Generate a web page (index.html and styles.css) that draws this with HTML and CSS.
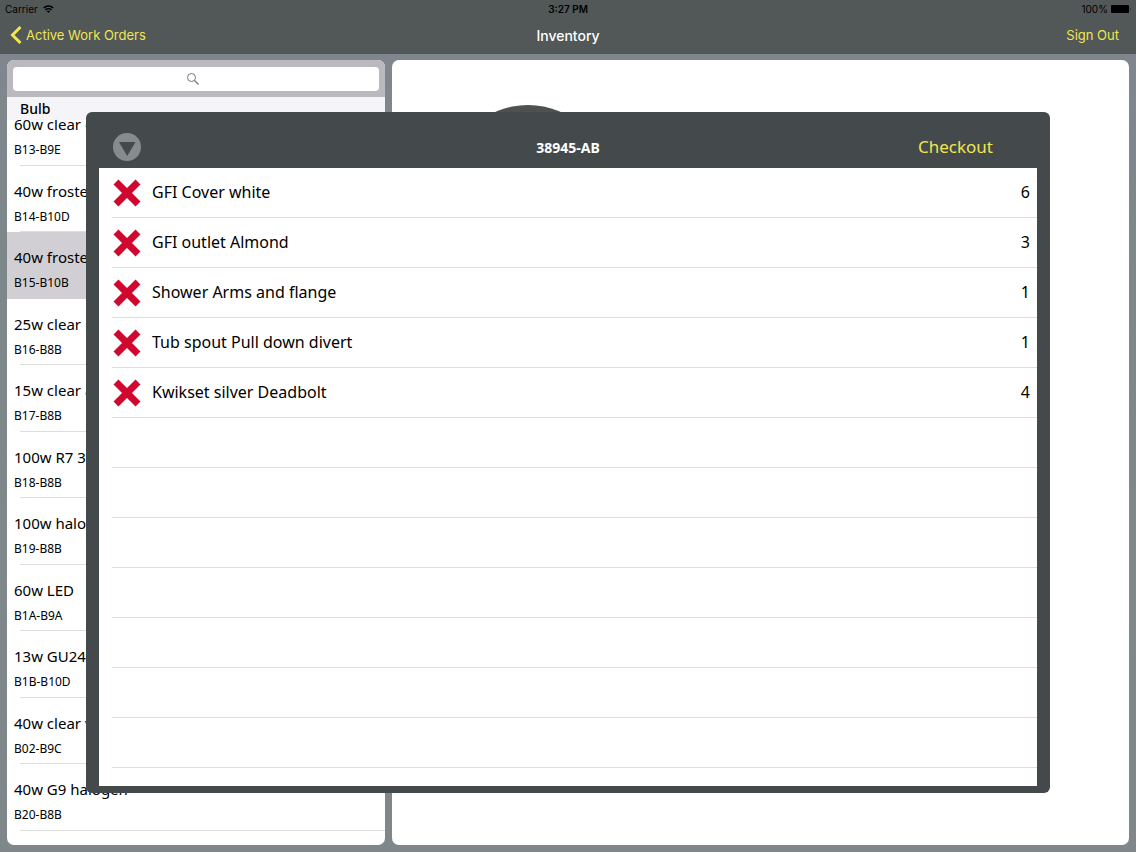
FILE: index.html
```html
<!DOCTYPE html>
<html lang="en">
<head>
    <meta charset="UTF-8">
    <meta name="viewport" content="width=device-width, initial-scale=1.0">
    <title>Inventory</title>
    <link rel="stylesheet" href="styles.css">
</head>
<body>

<header>
    <div class="status-bar">
        <span class="carrier">Carrier
            <svg width="11" height="8" viewBox="0 0 22 16" fill="none" stroke="#000" stroke-width="3">
                <path d="M1.5 6a13.5 13.5 0 0 1 19 0M5 10a8.5 8.5 0 0 1 12 0"/>
                <path d="M11 16l-3.500-3.500a5 5 0 0 1 7 0z" fill="#000" stroke="none"/>
            </svg>
        </span>
        <span class="time">3:27 PM</span>
        <span class="battery">100%
            <svg width="20" height="8" viewBox="0 0 20 8">
                <rect width="18" height="8" rx="1"/>
                <path d="M19 2.500q1 1.500 0 3z"/>
            </svg>
        </span>
    </div>
    <nav class="nav-bar">
        <a href="#" class="back">
            <svg width="12" height="18" viewBox="0 0 12 18" fill="none" stroke="#f0e650" stroke-width="3">
                <path d="M10.500 1L2.500 9l8 8"/>
            </svg>
            Active Work Orders
        </a>
        <h1>Inventory</h1>
        <a href="#" class="sign-out">Sign Out</a>
    </nav>
</header>

<main>
    <section class="sidebar">
        <div class="search">
            <input type="search" aria-label="Search">
            <svg width="12" height="12" viewBox="0 0 12 12" fill="none" stroke="#77777b">
                <circle cx="4.500" cy="4.500" r="4"/>
                <path d="M7.500 7.500l4 4" stroke-width="1.300"/>
            </svg>
        </div>
        <h2>Bulb</h2>
        <ul class="parts">
            <li><b>60w clear c</b><span>B13-B9E</span></li>
            <li><b>40w frosted</b><span>B14-B10D</span></li>
            <li class="selected"><b>40w frosted</b><span>B15-B10B</span></li>
            <li><b>25w clear r</b><span>B16-B8B</span></li>
            <li><b>15w clear a</b><span>B17-B8B</span></li>
            <li><b>100w R7 3"</b><span>B18-B8B</span></li>
            <li><b>100w halogen</b><span>B19-B8B</span></li>
            <li><b>60w LED</b><span>B1A-B9A</span></li>
            <li><b>13w GU24</b><span>B1B-B10D</span></li>
            <li><b>40w clear v</b><span>B02-B9C</span></li>
            <li><b>40w G9 halogen</b><span>B20-B8B</span></li>
        </ul>
    </section>
    <section class="detail">
        <div class="circle"></div>
    </section>
</main>

<div class="modal" role="dialog" aria-labelledby="orderTitle">
    <div class="modal-header">
        <button type="button" class="collapse" aria-label="Collapse">
            <svg width="28" height="28" viewBox="0 0 28 28">
                <circle cx="14" cy="14" r="14" fill="#858c8e"/>
                <path d="M6 9h16.500L14.200 23z" fill="#44494c"/>
            </svg>
        </button>
        <h2 id="orderTitle">38945-AB</h2>
        <button type="button" class="checkout">Checkout</button>
    </div>
    <div class="cart">
        <table>
            <tbody id="cartRows">
                <!-- filled by the script below -->
            </tbody>
        </table>
    </div>
</div>

<script>
    const items = [
        ['GFI Cover white', 6],
        ['GFI outlet Almond', 3],
        ['Shower Arms and flange', 1],
        ['Tub spout Pull down divert', 1],
        ['Kwikset silver Deadbolt', 4]
    ];
    const cartRows = document.getElementById('cartRows');

    // 12 rows, the ones after the last item stay empty
    for (let i = 0; i < 12; i++) {
        const row = document.createElement('tr');
        if (items[i]) {
            row.innerHTML = `
                <td class="remove"><button type="button" aria-label="Remove">
                    <svg width="28" height="28" viewBox="0 0 28 28" stroke="#d0082f" stroke-width="7">
                        <path d="M3 3l22 22M25 3L3 25"/>
                    </svg>
                </button></td>
                <td>${items[i][0]}</td>
                <td class="qty">${items[i][1]}</td>`;
        } else {
            row.innerHTML = '<td colspan="3"></td>';
        }
        cartRows.appendChild(row);
    }
</script>

</body>
</html>
```
FILE: styles.css
```css
* {
    box-sizing: border-box;
}
body {
    margin: 0;
    min-height: 100vh;
    display: flex;
    flex-direction: column;
    position: relative;
    background: linear-gradient(#82858f, #7d888a 25%, #80878a);
    font-family: "Noto Sans", sans-serif;
    color: #000;
}
h1, h2, ul {
    margin: 0;
    padding: 0;
}
button {
    display: block;
    border: none;
    background: none;
    padding: 0;
    cursor: pointer;
}
svg {
    display: block;
}
header {
    height: 54px;
    background: #525758;
    font-family: Inter, sans-serif;
}
.status-bar, .nav-bar {
    display: grid;
    grid-template-columns: 1fr auto 1fr;
    align-items: center;
}
.status-bar {
    height: 18px;
    padding: 0 5px;
    font-size: 10px;
}
.carrier, .battery {
    display: flex;
    align-items: center;
    gap: 5px;
}
.battery {
    justify-content: flex-end;
    gap: 3px;
}
.time {
    font-weight: 600;
}
.nav-bar {
    height: 34px;
    padding: 0 17px 0 10px;
    font-size: 13px;
}
.nav-bar a {
    color: #f0e650;
    text-decoration: none;
}
.nav-bar h1 {
    padding-left: 7px;
    color: #fff;
    font-size: 14px;
    font-weight: 500;
}
.back {
    display: flex;
    align-items: center;
    gap: 4px;
}
.sign-out {
    text-align: right;
}

main {
    flex: 1;
    display: grid;
    grid-template-columns: 378fr 737fr;
    gap: 7px;
    padding: 6px 7px 7px;
}
.sidebar, .detail {
    background: #fff;
    border-radius: 7px;
    overflow: hidden;
}
.sidebar {
    display: flex;
    flex-direction: column;
}
.search {
    height: 37px;
    padding: 6px;
    background: #bab9be;
    display: grid;
    place-items: center;
}
.search input, .search svg {
    grid-area: 1 / 1;
}
.search svg {
    margin-right: 6px;
}
.search input {
    width: 100%;
    height: 24px;
    border: none;
    border-radius: 4px;
    background: #fff;
}
.sidebar h2 {
    height: 23px;
    padding-left: 13px;
    margin-bottom: -21px;
    background: #f5f4f8;
    font-size: 14px;
    font-weight: 500;
    line-height: 23px;
    z-index: 1;
}
.parts {
    flex: 1;
    display: flex;
    flex-direction: column;
    padding-bottom: 14px;
    list-style: none;
}
.parts li {
    flex: 1;
    padding: 14px 7px 0;
    background: linear-gradient(#dddde0, #dddde0) 13px 100% / 100% 1px no-repeat;
}
.parts b {
    display: block;
    font-size: 15px;
    font-weight: 400;
    line-height: 22px;
}
.parts span {
    display: block;
    font-size: 12px;
    line-height: 30px;
}
.parts .selected {
    background: #d1cfd3;
}
.circle {
    width: 160px;
    height: 160px;
    margin: 45px 0 0 56px;
    border-radius: 50%;
    background: #4d5152;
}

/* order window over the page */
.modal {
    position: absolute;
    z-index: 2;
    top: 112px;
    left: 86px;
    right: 86px;
    bottom: 59px;
    display: flex;
    flex-direction: column;
    padding: 0 13px 7px;
    border-radius: 6px;
    background: #44494c;
}
.modal-header {
    height: 56px;
    padding: 14px 44px 0 14px;
    display: grid;
    grid-template-columns: 1fr auto 1fr;
    align-items: center;
}
.modal-header h2 {
    margin-left: 30px;
    color: #fff;
    font-size: 14px;
    font-weight: 700;
}
.collapse {
    justify-self: start;
}
.checkout {
    justify-self: end;
    padding-bottom: 2px;
    color: #f0e650;
    font-family: "Noto Sans", sans-serif;
    font-size: 17px;
}
.cart {
    flex: 1;
    padding-left: 13px;
    background: #fff;
    overflow: hidden;
}
.cart table {
    width: 100%;
    border-spacing: 0;
}
.cart td {
    height: 50px;
    padding: 0 7px 2px 0;
    border-bottom: 1px solid #dddde0;
    font-size: 16px;
}
.cart .remove {
    width: 40px;
    padding: 1px 0 0 1px;
}
.cart .qty {
    text-align: right;
}
```
